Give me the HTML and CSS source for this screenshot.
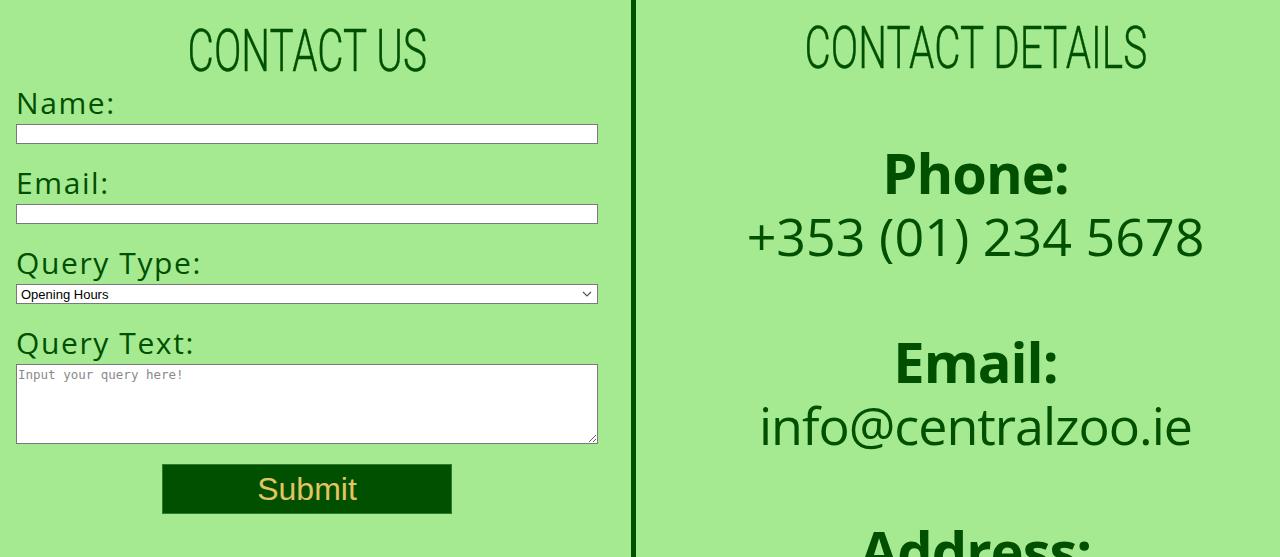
FILE: index.html
```html
<!DOCTYPE html>
<html lang="en">
<head>
<meta charset="utf-8">
<title>Contact - Central Zoo</title>
<link rel="stylesheet" href="styles.css">
</head>
<body>
<main class="page">
  <section class="col col-form">
    <h1 class="title title-left"><span class="title-text">CONTACT US</span></h1>
    <form class="form">
      <div class="group">
        <label class="label" for="name">Name:</label>
        <input class="field" type="text" id="name">
      </div>
      <div class="group">
        <label class="label" for="email">Email:</label>
        <input class="field" type="email" id="email">
      </div>
      <div class="group">
        <label class="label" for="qtype">Query Type:</label>
        <div class="select-wrap">
          <select class="field select" id="qtype">
            <option>Opening Hours</option>
            <option>Tickets</option>
            <option>Other</option>
          </select>
          <svg class="chevron" width="10" height="6" viewBox="0 0 10 6" aria-hidden="true"><path d="M1 1 L5 5 L9 1" fill="none" stroke="#555" stroke-width="1.2"/></svg>
        </div>
      </div>
      <div class="group">
        <label class="label" for="qtext">Query Text:</label>
        <textarea class="area" id="qtext" placeholder="Input your query here!"></textarea>
      </div>
      <div class="actions">
        <button class="submit" type="button">Submit</button>
      </div>
    </form>
  </section>
  <div class="divider"></div>
  <section class="col col-details">
    <h1 class="title title-right"><span class="title-text">CONTACT DETAILS</span></h1>
    <div class="details">
      <h2 class="d-head">Phone:</h2>
      <p class="d-val d-phone">+353 (01) 234 5678</p>
      <h2 class="d-head spaced">Email:</h2>
      <p class="d-val d-mail">info@centralzoo.ie</p>
      <h2 class="d-head spaced">Address:</h2>
      <p class="d-val">Central Zoo, Dublin</p>
    </div>
  </section>
</main>
</body>
</html>
```

FILE: styles.css
```css
html, body {
  margin: 0;
  padding: 0;
  background: #a5ea91;
  height: 100%;
}
body {
  overflow: hidden;
  color: #005000;
  font-family: "Open Sans", "Noto Sans", sans-serif;
}
.page {
  display: flex;
  height: 557px;
  overflow: hidden;
}
.col-form {
  width: 582px;
  padding: 0 33px 0 16px;
  flex: none;
}
.divider {
  width: 5px;
  flex: none;
  background: #005000;
}
.col-details {
  flex: 1;
  padding-left: 35px;
  text-align: center;
}
.title {
  margin: 0;
  font-family: Roboto, "Liberation Sans", sans-serif;
  font-weight: 300;
  font-size: 60px;
  line-height: 70px;
  height: 70px;
  text-align: center;
  color: #005000;
}
.title-left { margin-top: 16px; }
.title-right { margin-top: 13px; }
.title-text {
  display: inline-block;
  transform: scaleX(0.675);
  white-space: nowrap;
  -webkit-text-stroke: 0.4px #005000;
}
.form {
  display: flex;
  flex-direction: column;
}
.group {
  display: flex;
  flex-direction: column;
  gap: 4px;
  margin-bottom: 22px;
}
.label {
  font-size: 30px;
  line-height: 34px;
  letter-spacing: 1.6px;
}
.field {
  box-sizing: border-box;
  width: 582px;
  height: 20px;
  margin: 0;
  border: 1px solid #7a7a7a;
  background: #fff;
  padding: 0 4px;
}
.select-wrap {
  position: relative;
  width: 582px;
  height: 20px;
}
.select {
  display: block;
  -webkit-appearance: none;
  appearance: none;
  font-family: "Liberation Sans", Arial, sans-serif;
  font-size: 13px;
  color: #000;
  padding: 0 4px;
  border-radius: 0;
}
.chevron {
  position: absolute;
  right: 6px;
  top: 7px;
  pointer-events: none;
}
.area {
  box-sizing: border-box;
  width: 582px;
  height: 80px;
  margin: 0;
  border: 1px solid #7a7a7a;
  background: #fff;
  padding: 2px 1px;
  font-family: "DejaVu Sans Mono", "Liberation Mono", monospace;
  font-size: 12.5px;
}
.area::placeholder { color: #8a8a8a; }
.actions {
  display: flex;
  justify-content: center;
  margin-top: -2px;
}
.submit {
  width: 290px;
  height: 50px;
  background: #005000;
  border: 1px solid #2e7d2e;
  color: #e3c462;
  font-family: "Liberation Sans", Arial, sans-serif;
  font-size: 32px;
  padding: 0;
  cursor: pointer;
}
.details {
  margin-top: 58px;
}
.d-head {
  margin: 0;
  font-size: 56px;
  line-height: 63px;
  font-weight: 700;
  letter-spacing: -1px;
}
.d-head.spaced { margin-top: 63px; }
.d-val {
  margin: 0;
  font-size: 52px;
  line-height: 63px;
  font-weight: 400;
}
.d-phone { letter-spacing: 0; }
.d-mail { letter-spacing: -1px; }
```
